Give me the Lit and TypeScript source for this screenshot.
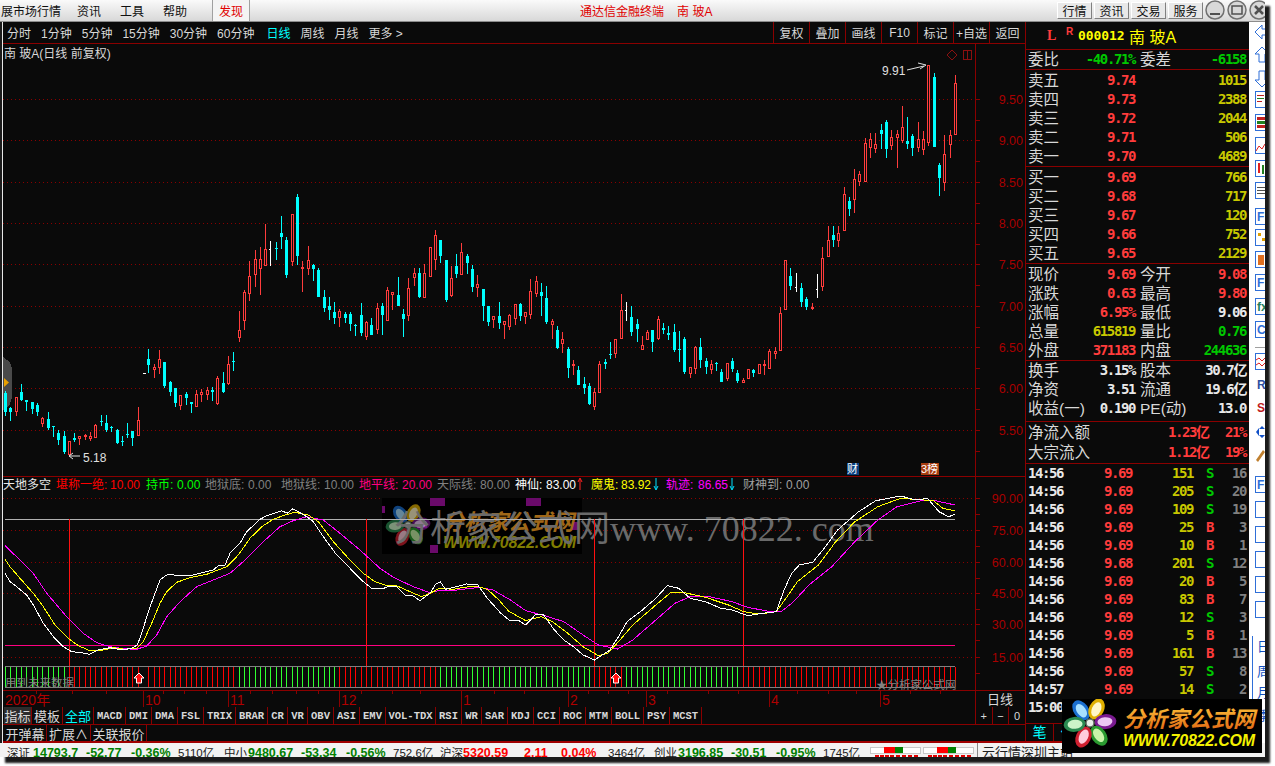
import { LitElement, html, svg, css } from 'lit';
import { customElement } from 'lit/decorators.js';

// candle traces read off the reference: u, bodyTop, bodyBottom, wickTop, wickBottom, kind
const TRACE_A = `16 638 695 632 708 c;31 683 695 680 722 c;49 652 697 652 708 r;64 636 660 612 663 c;79 660 665 660 692 c;97 666 686 666 702 c;112 675 695 670 708 c;127 715 731 712 741 r;145 717 744 697 750 c;160 738 741 738 771 c;175 759 780 751 795 c;193 768 816 753 822 c;208 784 826 784 830 r;223 774 780 760 786 c;238 769 776 769 795 r;256 766 771 762 780 r;271 768 776 756 782 r;286 736 773 733 773 r;304 722 725 705 738 c;319 729 750 705 756 c;334 741 744 738 756 c;352 750 789 747 792 c;367 783 786 768 798 c;382 762 765 729 774 c;397 753 774 753 798 c;415 720 767 681 768 r;445 537 555 507 579 c;463 561 571 552 594 r;478 537 564 510 582 r;493 546 618 546 623 c;511 606 636 603 648 c;526 624 669 624 681 c;541 645 677 645 690 r;559 642 654 636 675 c;574 666 671 666 699 c;589 642 680 630 680 r;604 636 645 627 666 r;622 630 645 621 660 r;637 630 635 621 664 c;652 594 672 588 675 r;670 609 636 576 639 c;685 552 612 528 615 r;700 543 546 516 573 c;718 450 473 393 486 r;733 336 423 330 450 r;748 288 342 243 363 r;766 237 285 210 321 r;781 237 267 201 345 r;796 207 258 132 258 r;811 207 208 183 258 w;829 203 206 186 240 c;844 159 171 108 207 c;859 180 285 171 294 c;877 102 246 102 258 r;892 51 228 42 255 c;907 261 266 243 336 r;925 240 267 198 285 r;940 255 267 252 303 c;955 270 351 264 351 c;973 351 384 330 396 c;988 378 390 351 420 c;1003 396 414 366 432 c;1018 393 414 387 441 r;1036 402 414 396 429 c;1051 402 432 396 453 c;1066 435 438 432 468 c;1084 405 459 369 468 c;1099 426 471 423 480 r;1114 435 465 414 465 c;1132 384 450 369 462 r;1147 378 405 369 465 c;1162 330 423 321 423 r;1177 336 345 336 390 r;1195 345 378 291 378 c`;
const TRACE_B = `10 372 387 357 441 c;25 294 378 264 393 r;43 249 264 234 288 r;58 249 321 234 324 c;73 249 324 222 324 r;91 171 261 171 261 r;106 135 210 120 240 r;121 150 198 150 219 c;139 210 330 210 336 c;154 264 318 228 321 r;169 228 252 192 264 c;184 186 255 159 255 r;202 198 219 192 252 c;217 237 291 225 306 c;232 282 294 255 321 r;250 297 348 297 393 c;265 348 396 348 408 c;280 378 390 378 414 r;298 378 399 336 417 c;313 393 405 393 447 r;328 375 411 372 420 r;346 342 387 342 405 r;361 342 378 339 393 c;376 366 381 366 402 r;391 303 375 267 387 r;409 273 312 258 321 r;424 306 318 279 378 c;439 324 396 288 402 c;457 393 405 387 447 r;472 420 474 408 477 c;487 447 462 426 489 r;505 477 534 471 564 c;520 522 527 510 555 r;535 540 585 528 585 c;553 582 594 561 612 c;568 588 642 579 645 c;583 606 651 594 660 r;598 522 608 513 608 r;616 516 522 507 537 c;631 492 495 456 507 c;646 447 492 447 504 r;664 360 447 312 447 r;679 360 361 336 393 w;694 381 426 348 438 c;712 402 417 387 456 c;727 465 480 438 480 r;742 426 450 420 450 r;757 420 456 420 486 c;775 387 447 378 450 r;790 414 420 399 432 c;805 429 435 408 450 c;823 426 480 402 486 c;838 477 480 423 516 c;853 447 546 441 552 c;871 531 552 531 564 r;886 471 537 468 552 r;901 471 510 444 534 c;919 513 531 504 552 c;934 522 540 510 552 r;949 519 522 516 543 c;964 546 576 537 576 c;982 519 567 519 573 r;997 513 537 504 546 c;1012 549 573 540 579 c;1030 570 579 564 579 r;1045 537 567 537 567 r;1060 540 549 537 561 c;1078 522 552 522 552 r;1093 522 528 510 555 r;1108 483 537 477 537 r;1126 483 492 471 507 r;1141 369 483 351 483 r;1156 210 360 210 360 r`;
const TRACE_C = `31 678 708 654 720 c;49 711 712 669 725 w;64 714 756 699 771 c;79 747 771 741 780 c;97 771 777 759 780 r;112 717 718 672 744 w;127 624 711 591 723 r;145 570 621 528 621 r;160 555 570 528 591 c;175 549 572 528 591 r;193 432 543 411 543 r;208 453 477 441 498 c;223 387 450 357 489 r;238 372 396 363 408 r;256 279 396 264 396 r;271 267 294 249 324 r;286 282 297 249 309 r;304 240 252 222 297 c;319 216 297 210 324 c;334 261 288 240 300 r;352 252 264 240 354 r;367 231 273 168 279 r;382 273 282 201 297 c;397 258 294 252 318 c;415 267 294 216 306 r;430 267 300 243 315 r;445 45 279 45 288 r;463 81 291 69 291 c;478 345 384 339 438 c;493 312 399 255 423 r;511 255 285 240 324 r;526 99 255 75 255 r`;

interface Candle { x: number; top: number; bottom: number; wickTop: number; wickBottom: number; kind: string; }

const readTrace = (trace: string, x0: number, y0: number): Candle[] =>
  trace.split(';').map((row) => {
    const p = row.split(' ');
    return {
      x: Math.floor(x0 + +p[0] / 3),
      top: Math.round(y0 + +p[1] / 3),
      bottom: Math.round(y0 + +p[2] / 3),
      wickTop: Math.round(y0 + +p[3] / 3),
      wickBottom: Math.round(y0 + +p[4] / 3),
      kind: p[5],
    };
  });

const CANDLES = [...readTrace(TRACE_A, 0, 180), ...readTrace(TRACE_B, 400, 190), ...readTrace(TRACE_C, 780, 50)];

// indicator lines, two crops each
const line = (a: number[], b: number[]) => {
  const pts: string[] = [];
  for (let i = 0; i < a.length; i += 2) pts.push(`${(a[i] / 3).toFixed(1)},${(470 + a[i + 1] / 3).toFixed(1)}`);
  for (let i = 0; i < b.length; i += 2) pts.push(`${(430 + b[i] / 2.613).toFixed(1)},${(470 + b[i + 1] / 3).toFixed(1)}`);
  return pts.join(' ');
};

const WHITE_LINE = line(
  [15,310,30,335,50,350,80,375,100,405,130,460,160,500,190,530,215,545,245,548,268,553,295,540,330,533,365,540,395,535,412,525,425,490,445,425,465,370,480,330,500,315,515,313,530,318,570,317,600,310,640,300,655,287,675,285,690,250,720,220,740,185,780,148,800,137,845,122,862,130,878,116,895,125,920,140,940,155,970,200,1010,255,1050,295,1090,335,1115,355,1145,357,1170,348,1190,350,1215,375,1240,378,1260,392,1290,370],
  [0,370,15,342,27,335,40,358,70,350,95,342,125,345,150,385,185,430,210,453,230,450,250,465,275,435,295,432,325,480,350,510,375,530,400,555,430,570,470,540,490,505,515,455,555,420,590,385,620,347,650,355,680,385,720,395,760,415,790,420,830,437,870,430,905,425,925,360,945,310,965,285,1000,277,1030,235,1065,180,1120,125,1165,92,1230,78,1270,90,1300,85,1330,125,1355,140,1372,133]
);
const YELLOW_LINE = line(
  [15,268,30,290,60,325,100,370,130,410,165,465,205,505,235,527,270,542,300,542,340,533,375,538,410,535,430,515,455,460,480,400,500,365,530,337,570,323,620,313,680,290,715,255,750,205,785,170,820,148,855,135,885,127,925,135,955,155,1000,215,1050,270,1090,310,1125,335,1160,347,1190,347,1230,365,1265,380,1290,370],
  [0,370,25,355,60,358,90,352,120,348,150,358,180,390,205,423,250,452,290,440,320,455,360,490,400,530,440,557,465,550,500,505,530,465,590,405,630,367,665,368,720,382,780,405,820,425,860,432,905,425,930,385,960,335,1015,285,1060,215,1110,155,1170,110,1230,85,1290,90,1315,92,1340,115,1372,123]
);
const MAGENTA_LINE = line(
  [15,227,60,270,100,310,140,370,200,440,250,490,290,518,330,530,370,536,410,538,440,528,470,495,500,440,540,395,590,350,640,330,690,310,735,270,790,215,840,170,880,152,920,140,970,150,1020,190,1080,240,1140,295,1180,322,1240,350,1290,368],
  [0,368,30,360,70,360,130,352,165,360,210,390,250,422,300,437,350,455,400,495,440,525,490,537,530,510,590,450,640,400,680,380,730,380,790,395,830,412,880,423,920,423,950,395,990,345,1050,290,1110,215,1170,150,1220,110,1280,93,1320,92,1372,105]
);

const MAIN_LEVELS: [number, string][] = [[99,'9.50'],[140,'9.00'],[182,'8.50'],[223,'8.00'],[264,'7.50'],[306,'7.00'],[347,'6.50'],[388,'6.00'],[430,'5.50']];
const SUB_LEVELS: [number, string][] = [[498,'90.00'],[530,'75.00'],[562,'60.00'],[593,'45.00'],[624,'30.00'],[657,'15.00']];
const BAR_RED: [number, number][] = [[69,234],[335,437],[592,622],[741,960]];
const MONTHS: [number, string][] = [[143,'10'],[228,'11'],[339,'12'],[461,'1'],[568,'2'],[646,'3'],[769,'4'],[880,'5']];
const MINOR_TICKS = [36,72,106,163,184,206,250,272,296,318,361,392,420,494,524,588,608,628,667,708,738,797,828,856,910,940];

const LEGEND: [number, string, string][] = [
  [3,'天地多空','#e8e8e8'],[56,'堪称一绝:','#ff0000'],[110,'10.00','#ff0000'],[146,'持币:','#00ff00'],[177,'0.00','#00ff00'],
  [205,'地狱底:','#808080'],[248,'0.00','#808080'],[281,'地狱线:','#808080'],[324,'10.00','#808080'],
  [359,'地平线:','#ff0080'],[402,'20.00','#ff0080'],[437,'天际线:','#808080'],[480,'80.00','#808080'],
  [515,'神仙:','#ffffff'],[546,'83.00','#ffffff'],[591,'魔鬼:','#ffff00'],[621,'83.92','#ffff00'],
  [666,'轨迹:','#ff00ff'],[698,'86.65','#ff00ff'],[743,'财神到:','#a0a0a0'],[786,'0.00','#a0a0a0'],
];

const PERIODS = ['分时','1分钟','5分钟','15分钟','30分钟','60分钟','日线','周线','月线','更多 >'];
const ACTIONS = ['复权','叠加','画线','F10','标记','+自选','返回'];
const TABS: [string, number][] = [['MACD',32],['DMI',26],['DMA',26],['FSL',26],['TRIX',32],['BRAR',32],['CR',20],['VR',20],['OBV',26],['ASI',26],['EMV',26],['VOL-TDX',50],['RSI',26],['WR',20],['SAR',26],['KDJ',26],['CCI',26],['ROC',26],['MTM',26],['BOLL',32],['PSY',26],['MCST',32]];

const ASKS = [['卖五','9.74','1015'],['卖四','9.73','2388'],['卖三','9.72','2044'],['卖二','9.71','506'],['卖一','9.70','4689']];
const BIDS = [['买一','9.69','766'],['买二','9.68','717'],['买三','9.67','120'],['买四','9.66','752'],['买五','9.65','2129']];
const STATS: string[][] = [
  ['现价','9.69','up','今开','9.08','up'],['涨跌','0.63','up','最高','9.80','up'],['涨幅','6.95%','up','最低','9.06','wh'],
  ['总量','615819','yl','量比','0.76','gn'],['外盘','371183','up','内盘','244636','gn'],
];
const FINANCE: string[][] = [['换手','3.15%','股本','30.7亿'],['净资','3.51','流通','19.6亿'],['收益(一)','0.190','PE(动)','13.0']];
const TRADES: [string, string, string, string, string][] = [
  ['14:56','9.69','151','S','16'],['14:56','9.69','205','S','20'],['14:56','9.69','109','S','19'],['14:56','9.69','25','B','3'],
  ['14:56','9.69','10','B','1'],['14:56','9.68','201','S','12'],['14:56','9.69','20','B','5'],['14:56','9.69','83','B','7'],
  ['14:56','9.69','12','S','3'],['14:56','9.69','5','B','1'],['14:56','9.69','161','B','13'],['14:56','9.69','57','S','8'],
  ['14:57','9.69','14','S','2'],['15:00','','','',''],
];
const STATUS: [string, number, string][] = [
  ['深证',26,'tx'],['14793.7',53,'dn'],['-52.77',45,'dn'],['-0.36%',47,'dn'],['5110亿',46,'tx'],
  ['中小',24,'tx'],['9480.67',53,'dn'],['-53.34',45,'dn'],['-0.56%',47,'dn'],['752.6亿',47,'tx'],
  ['沪深',23,'tx'],['5320.59',61,'rs'],['2.11',37,'rs'],['0.04%',47,'rs'],['3464亿',46,'tx'],
  ['创业',24,'tx'],['3196.85',53,'dn'],['-30.51',45,'dn'],['-0.95%',47,'dn'],['1745亿',47,'tx'],
];

const flower = (cx: number, cy: number, k: number) => {
  const petals: [number, string, string][] = [
    [-125,'#1a6fd0','#a8e0ff'],[-65,'#e0b000','#fff6c8'],[-5,'#7a1a90','#ecc8f4'],
    [55,'#2a9a30','#c8f4a8'],[115,'#d02030','#ffccdc'],[175,'#2a8a50','#ccf4c8'],
  ];
  return svg`<g transform="translate(${cx} ${cy}) scale(${k})">
    ${petals.map(([a, outer, inner]) => svg`<g transform="rotate(${a})">
      <ellipse cx="15.5" rx="11" ry="7.5" fill=${outer}></ellipse>
      <ellipse cx="15" rx="7.5" ry="4.5" fill=${inner}></ellipse>
    </g>`)}
    <circle r="4" fill="#e8f0e8" stroke="#607060" stroke-width="1.5"></circle>
  </g>`;
};

@customElement('app-root')
export class AppRoot extends LitElement {
  static styles = css`
    :host {
      display: block;
      position: relative;
      width: 1275px;
      height: 766px;
      overflow: hidden;
      background: #fff;
      font-family: 'Liberation Sans', 'Noto Sans CJK SC', sans-serif;
      font-size: 12px;
      --rule: #8a0000;
      --bg: #0a0a0a;
    }
    .window {
      width: 1265px;
      height: 757px;
      display: flex;
      flex-direction: column;
      background: #f0f0f0;
      box-shadow: 5px 6px 2px #1a1a1a;
    }
    .menubar {
      height: 22px;
      flex: none;
      box-sizing: border-box;
      display: flex;
      align-items: center;
      overflow: hidden;
      color: #101010;
      background: linear-gradient(#fafafa, #d8d8d8);
      border-bottom: 1px solid #8c8c8c;
      padding-left: 1px;
    }
    .menubar .item { margin-right: 19px; }
    .menubar .item:first-child { margin-right: 16px; }
    .menubar .find {
      width: 38px;
      height: 21px;
      margin-left: 6px;
      box-sizing: border-box;
      display: flex;
      align-items: center;
      justify-content: center;
      color: #e00000;
      background: #f4f4f4;
      border-left: 1px solid #a0a0a0;
      border-right: 1px solid #a0a0a0;
    }
    .menubar .title { margin-left: 330px; color: #e00000; display: flex; gap: 13px; }
    .menubar .right { margin-left: auto; display: flex; align-items: center; }
    .menubar .btn {
      width: 35px;
      height: 17px;
      margin-right: 2px;
      box-sizing: border-box;
      display: flex;
      align-items: center;
      justify-content: center;
      background: #e8e8e8;
      border: 1px solid #fff;
      border-right-color: #808080;
      border-bottom-color: #808080;
    }
    .menubar svg { display: block; }
    .body { flex: 1; min-height: 0; display: flex; }
    .edge {
      width: 3px;
      flex: none;
      box-sizing: border-box;
      background: #1c1c1c;
      border-right: 1px solid #e8e8e8;
    }
    .charts { width: 1022px; flex: none; display: flex; flex-direction: column; background: var(--bg); color: #d8d8d8; }
    .periods {
      height: 22px;
      flex: none;
      box-sizing: border-box;
      display: flex;
      align-items: stretch;
      border-bottom: 1px solid var(--rule);
      padding-left: 4px;
    }
    .periods .left { display: flex; align-items: center; gap: 10px; flex: 1; }
    .periods .on { color: #00ffff; margin-left: 2px; }
    .periods .act {
      width: 36px;
      display: flex;
      align-items: center;
      justify-content: center;
      box-sizing: border-box;
      border-left: 1px solid var(--rule);
    }
    .plot { display: block; width: 1022px; height: 663px; flex: none; }
    .plot text { font-family: 'Liberation Sans', 'Noto Sans CJK SC', sans-serif; font-size: 12px; fill: #d8d8d8; }
    .plot .axis { fill: #a80000; text-anchor: end; font-size: 12.5px; }
    .plot .date { fill: #b00000; font-size: 14px; }
    .plot .note { font-size: 11.5px; fill: #808080; }
    .plot .mark { font-size: 11px; fill: #fff; }
    .plot .wm { font-size: 36px; fill: #6a6a6a; font-family: 'Liberation Serif', 'Noto Sans CJK SC', serif; }
    .plot .wm1 { font-size: 22px; font-weight: 700; font-style: italic; fill: #a06818; }
    .plot .wm2 { font-size: 16px; font-weight: 700; font-style: italic; fill: #807c00; }
    .tabs {
      height: 18px;
      flex: none;
      box-sizing: border-box;
      display: flex;
      padding-left: 1px;
      border-bottom: 1px solid var(--rule);
    }
    .tabs .cell {
      flex: none;
      box-sizing: border-box;
      display: flex;
      align-items: center;
      justify-content: center;
      border-right: 1px solid var(--rule);
      white-space: nowrap;
    }
    .tabs .cjk { width: 31px; font-size: 13px; }
    .tabs .grey { width: 28px; background: #2c2c2c; }
    .tabs .sel { color: #00ffff; }
    .tabs .code { font-family: 'Liberation Mono', monospace; font-size: 10.5px; font-weight: 700; }
    .tabs .zoomers { margin-left: auto; display: flex; width: 50px; border-left: 1px solid var(--rule); box-sizing: border-box; }
    .tabs .zoomers .cell { flex: 1; font-size: 11px; }
    .tabs .zoomers .cell:last-child { border: 0; }
    .tabs .w43 { width: 43px; }
    .tabs .w44 { width: 44px; }
    .tabs .w56 { width: 56px; }
    .tabs.second { border-bottom: 2px solid #a00000; }
    .panel {
      width: 224px;
      flex: none;
      box-sizing: border-box;
      display: flex;
      flex-direction: column;
      background: var(--bg);
      border-left: 1px solid var(--rule);
      border-bottom: 2px solid #a00000;
      color: #d8d8d8;
      font-size: 15.5px;
    }
    .head {
      height: 28px;
      flex: none;
      box-sizing: border-box;
      display: flex;
      align-items: center;
      padding-left: 21px;
      color: #ffff00;
      border-bottom: 1px solid var(--rule);
    }
    .head .l { color: #ff3c3c; font: 700 14px 'Liberation Serif', serif; width: 19px; }
    .head .r { color: #ff3c3c; font: 700 10px 'Liberation Sans', sans-serif; width: 12px; margin-top: -8px; }
    .head .code { font: 700 13px 'DejaVu Sans Mono', monospace; width: 51px; letter-spacing: -.1px; }
    .head .name { font-size: 16px; }
    .sec { flex: none; padding: 0 3px 0 2px; border-bottom: 1px solid var(--rule); }
    .sec.one { height: 19px; }
    .sec.five { height: 95px; padding-top: 1px; }
    .sec.three { height: 60px; }
    .sec.two { height: 41px; }
    .row {
      height: 19px;
      display: grid;
      grid-template-columns: 40px 67px 45px 1fr;
      align-items: center;
      white-space: nowrap;
      line-height: 19px;
    }
    .row > :nth-child(2), .row > :nth-child(4) { text-align: right; }
    .row > :nth-child(3) { padding-left: 5px; }
    .num {
      font-family: 'DejaVu Sans Mono', 'Noto Sans CJK SC', monospace;
      font-weight: 700;
      font-size: 14px;
      letter-spacing: -1.4px;
    }
    .up { color: #ff3c3c; }
    .gn { color: #00c800; }
    .yl { color: #c8c800; }
    .wh { color: #e8e8e8; }
    .gy { color: #808080; }
    .row.flows { height: 20px; grid-template-columns: 140px 44px 1fr; }
    .row.flows > :nth-child(2) { text-align: left; padding: 0; }
    .row.flows > :nth-child(3) { text-align: right; padding: 0; }
    .trades { flex: 1; min-height: 0; padding: 0 3px 0 2px; overflow: hidden; border-bottom: 1px solid var(--rule); }
    .trade {
      height: 18px;
      display: grid;
      grid-template-columns: 40px 64px 61px 34px 1fr;
      align-items: center;
      text-align: right;
    }
    .trade > :first-child { text-align: left; }
    .trade > :nth-child(4) { text-align: left; padding-left: 13px; }
    .modes { height: 17px; flex: none; display: flex; color: #00ffff; font-size: 14px; }
    .modes span { width: 27px; text-align: center; line-height: 17px; border-right: 1px solid var(--rule); }
    .tools { width: 16px; flex: none; background: #fff; }
    .tools svg { display: block; }
    .tools text { font-family: 'Liberation Sans', 'Noto Sans CJK SC', sans-serif; }
    .status {
      height: 14px;
      flex: none;
      display: flex;
      overflow: hidden;
      padding-left: 7px;
      color: #202020;
      background: #f2f2f2;
      white-space: nowrap;
      line-height: 20px;
      font-size: 12.5px;
    }
    .status .tx { font-size: 11.5px; }
    .status .dn { color: #008000; font-weight: 700; }
    .status .rs { color: #ff0000; font-weight: 700; }
    .status .minis { display: block; flex: none; }
    .status .cloud { margin-left: 3px; border-left: 1px solid #888; padding-left: 4px; font-size: 13px; }
    .logo { position: absolute; left: 1062px; top: 699px; width: 200px; height: 54px; display: block; background: #000; }
    .logo .t1 { font: italic 700 22px 'Noto Sans CJK SC', sans-serif; fill: url(#logoGrad); }
    .logo .t2 { font: italic 700 16px 'Liberation Sans', sans-serif; fill: #f4f000; }
  `;

  private candle(c: Candle) {
    const x = c.x;
    if (c.kind === 'w') {
      return svg`<rect x=${x} y=${c.wickTop} width="1" height=${c.wickBottom - c.wickTop} fill="#fff"></rect>
        <rect x=${x - 1} y=${c.top} width="1" height="1" fill="#fff"></rect>`;
    }
    const col = c.kind === 'c' ? '#00ffff' : '#ff3c3c';
    const wick = svg`<rect x=${x} y=${c.wickTop} width="1" height=${Math.max(0, c.top - c.wickTop)} fill=${col}></rect>
      <rect x=${x} y=${c.bottom} width="1" height=${Math.max(0, c.wickBottom - c.bottom)} fill=${col}></rect>`;
    const h = Math.max(1, c.bottom - c.top);
    return c.kind === 'c'
      ? svg`${wick}<rect x=${x - 1} y=${c.top} width="3" height=${h} fill=${col}></rect>`
      : svg`${wick}<rect x=${x - 0.5} y=${c.top + 0.5} width="2" height=${Math.max(1, h - 1)} fill="none" stroke=${col}></rect>`;
  }

  private volumeStrip() {
    return CANDLES.map((c) => {
      const red = BAR_RED.some(([a, b]) => c.x >= a && c.x <= b);
      return svg`<rect x=${c.x} y="667" width="1" height="20" fill=${red ? '#ff0000' : '#30ff30'}></rect>`;
    });
  }

  private upArrow(x: number) {
    return svg`<path d="M${x} 673 L${x + 5} 678 H${x + 2.5} V683 H${x - 2.5} V678 H${x - 5} Z" fill="#ff1010" stroke="#fff"></path>`;
  }

  // everything between y=44 and y=707, drawn in page coordinates
  private plot() {
    return html`<svg class="plot" viewBox="3 44 1022 663" shape-rendering="crispEdges">
      ${[...MAIN_LEVELS, ...SUB_LEVELS].map(([y]) => svg`<line x1="3" x2="975" y1=${y + 0.5} y2=${y + 0.5} stroke="#8a0000" stroke-dasharray="1 3"></line>`)}
      <g shape-rendering="auto">
        <text x="4" y="58">南 玻A(日线 前复权)</text>
        ${MAIN_LEVELS.map(([y, t]) => svg`<text class="axis" x="1023" y=${y + 5}>${t}</text>`)}
        ${SUB_LEVELS.map(([y, t]) => svg`<text class="axis" x="1023" y=${y + 5}>${t}</text>`)}
      </g>
      ${MAIN_LEVELS.flatMap(([y]) => [y, y + 21]).map((y) => svg`<line x1="975" x2="980" y1=${y + 0.5} y2=${y + 0.5} stroke="#8a0000"></line>`)}
      ${SUB_LEVELS.flatMap(([y]) => [y, y + 16]).map((y) => svg`<line x1="975" x2="980" y1=${y + 0.5} y2=${y + 0.5} stroke="#8a0000"></line>`)}
      <line x1="975.5" x2="975.5" y1="44" y2="707" stroke="#8a0000"></line>
      <line x1="3" x2="1025" y1="476.5" y2="476.5" stroke="#8a0000"></line>
      <line x1="3" x2="1025" y1="690.5" y2="690.5" stroke="#8a0000"></line>

      <path d="M952 50 L957 55 L952 60 L947 55 Z" fill="none" stroke="#8a1010"></path>
      <rect x="963.5" y="50.5" width="8" height="9" fill="none" stroke="#8a1010"></rect>
      <line x1="967.5" x2="967.5" y1="50" y2="60" stroke="#8a1010"></line>

      <path d="M3 357 L10 362 L12 368 V398 L9 406 L3 410 Z" fill="#4a4a4a"></path>
      ${CANDLES.map((c) => this.candle(c))}
      <path d="M4 378 L9 382.5 L4 387 Z" fill="#e8a000" shape-rendering="auto"></path>
      <rect x="143" y="373" width="3" height="1" fill="#fff"></rect>

      <g shape-rendering="auto" stroke="#e0e0e0" fill="none">
        <path d="M907 70 L924 66 M918 63 L926 65 L920 69"></path>
        <path d="M80 456 H70 M73 453 L69 456 L73 459"></path>
      </g>
      <g shape-rendering="auto">
        <text x="882" y="75" style="fill:#e0e0e0">9.91</text>
        <text x="83" y="462" style="fill:#e0e0e0">5.18</text>
      </g>
      <rect x="847" y="463" width="12" height="12" fill="#0a3f80"></rect>
      <rect x="921" y="463" width="18" height="12" fill="#a83c10"></rect>
      <g shape-rendering="auto">
        <text class="mark" x="847" y="473">财</text>
        <text class="mark" x="921" y="473">3榜</text>
        ${LEGEND.map(([x, t, c]) => svg`<text x=${x} y="489" style="fill:${c}">${t}</text>`)}
        <path d="M580 490 V479 M578 482 L580 478 L582 482" stroke="#ff2020" fill="none"></path>
        <path d="M656 478 V489 M654 486 L656 490 L658 486" stroke="#00e0ff" fill="none"></path>
        <path d="M732 478 V489 M730 486 L732 490 L734 486" stroke="#00e0ff" fill="none"></path>
      </g>

      <rect x="382" y="498" width="200" height="56" fill="#000"></rect>
      ${[[430,498,15,8],[526,498,15,8],[572,522,7,8],[430,545,8,8],[382,506,3,7],[417,525,10,3]].map(([x, y, w, h]) => svg`<rect x=${x} y=${y} width=${w} height=${h} fill="#6a0a6a"></rect>`)}
      <g shape-rendering="auto">
        <g opacity="0.6">${flower(408, 525, 0.85)}</g>
        <text class="wm1" x="442" y="530">分析家公式网</text>
        <text class="wm2" x="443" y="548" textLength="133">WWW.70822.COM</text>
        <text class="wm" x="394" y="541">分析家公式网www. 70822. com</text>
      </g>

      <line x1="5" x2="955" y1="519.5" y2="519.5" stroke="#b0b0b0"></line>
      <line x1="5" x2="955" y1="645.5" y2="645.5" stroke="#ff0080"></line>
      ${[69, 366, 594, 743].map((x) => svg`<line x1=${x + 0.5} x2=${x + 0.5} y1="519" y2="666" stroke="#ff1010"></line>`)}
      <polyline points=${MAGENTA_LINE} fill="none" stroke="#ff00ff"></polyline>
      <polyline points=${YELLOW_LINE} fill="none" stroke="#ffff00"></polyline>
      <polyline points=${WHITE_LINE} fill="none" stroke="#ffffff"></polyline>

      ${this.volumeStrip()}
      <rect x="5" y="666" width="950" height="1" fill="#808080"></rect>
      <rect x="5" y="687" width="950" height="1" fill="#808080"></rect>
      <g shape-rendering="auto">
        ${this.upArrow(139)}${this.upArrow(616)}
        <text class="note" x="5" y="687">用到未来数据</text>
        <text class="note" x="876" y="689">★分析家公式网</text>
      </g>

      ${MONTHS.map(([x]) => svg`<line x1=${x + 0.5} x2=${x + 0.5} y1="691" y2="707" stroke="#8a0000"></line>`)}
      ${MINOR_TICKS.map((x) => svg`<line x1=${x + 0.5} x2=${x + 0.5} y1="691" y2="694" stroke="#8a0000"></line>`)}
      <g shape-rendering="auto">
        <text class="date" x="5" y="705">2020年</text>
        ${MONTHS.map(([x, t]) => svg`<text class="date" x=${x + 2} y="705">${t}</text>`)}
        <text x="987" y="704" style="font-size:13px">日线</text>
      </g>
    </svg>`;
  }

  private side() {
    return html`<div class="panel">
      <div class="head">
        <span class="l">L</span><span class="r">R</span><span class="code">000012</span><span class="name">南 玻A</span>
      </div>
      <div class="sec one">
        <div class="row"><span>委比</span><span class="num gn">-40.71%</span><span>委差</span><span class="num gn">-6158</span></div>
      </div>
      <div class="sec five">
        ${ASKS.map(([l, p, v]) => html`<div class="row"><span>${l}</span><span class="num up">${p}</span><span></span><span class="num yl">${v}</span></div>`)}
      </div>
      <div class="sec five">
        ${BIDS.map(([l, p, v]) => html`<div class="row"><span>${l}</span><span class="num up">${p}</span><span></span><span class="num yl">${v}</span></div>`)}
      </div>
      <div class="sec five">
        ${STATS.map(([a, b, bc, c, d, dc]) => html`<div class="row"><span>${a}</span><span class="num ${bc}">${b}</span><span>${c}</span><span class="num ${dc}">${d}</span></div>`)}
      </div>
      <div class="sec three">
        ${FINANCE.map(([a, b, c, d]) => html`<div class="row"><span>${a}</span><span class="num wh">${b}</span><span>${c}</span><span class="num wh">${d}</span></div>`)}
      </div>
      <div class="sec two">
        <div class="row flows"><span>净流入额</span><span class="num up">1.23亿</span><span class="num up">21%</span></div>
        <div class="row flows"><span>大宗流入</span><span class="num up">1.12亿</span><span class="num up">19%</span></div>
      </div>
      <div class="trades">
        ${TRADES.map(([t, p, v, s, n]) => html`<div class="trade num">
          <span class="wh">${t}</span><span class="up">${p}</span><span class="yl">${v}</span>
          <span class=${s === 'S' ? 'gn' : 'up'}>${s}</span><span class="gy">${n}</span>
        </div>`)}
      </div>
      <div class="modes"><span>笔</span><span>价</span></div>
    </div>`;
  }

  private tools() {
    const B = '#2f6fd8';
    const frame = (y: number, inner: unknown = '') => svg`<rect x="6.5" y=${y - 8.5} width="14" height="16" fill="#fff" stroke=${B}></rect>${inner}`;
    const label = (y: number, t: string, c = B) => svg`<text x="8" y=${y + 4} font-size="12" font-weight="700" fill=${c}>${t}</text>`;
    return svg`<svg width="16" height="719" viewBox="0 22 16 719" shape-rendering="crispEdges">
      <g shape-rendering="auto" fill="#fff" stroke=${B}>
        <path d="M6 32 L13 25 V29 H20 V35 H13 V39 Z"></path>
        <path d="M13 47 L20 54 H16 V62 H10 V54 H6 Z"></path>
        <path d="M13 87 L20 80 H16 V71 H10 V80 H6 Z"></path>
      </g>
      ${frame(100, svg`<rect x="8" y="95" width="7" height="1" fill="#c02020"></rect><rect x="8" y="98" width="7" height="1" fill="#208020"></rect><rect x="8" y="101" width="5" height="1" fill="#c02020"></rect>`)}
      ${frame(123, svg`<rect x="8" y="117" width="8" height="3" fill="#c02020"></rect><rect x="8" y="121" width="8" height="3" fill="#208020"></rect><rect x="8" y="125" width="8" height="3" fill="#c02020"></rect>`)}
      ${frame(146, svg`<path d="M7 151 L10 146 L13 149 L16 144" stroke="#e02020" fill="none" shape-rendering="auto"></path>`)}
      ${frame(169, svg`<rect x="9" y="163" width="2" height="10" fill="#e02020"></rect><rect x="13" y="165" width="2" height="9" fill="#208020"></rect>`)}
      ${frame(191, svg`<rect x="8" y="187" width="8" height="1" fill="#505050"></rect><rect x="8" y="190" width="8" height="1" fill="#505050"></rect><rect x="8" y="193" width="8" height="1" fill="#505050"></rect>`)}
      ${frame(217)}
      ${frame(238, svg`<rect x="9" y="233" width="3" height="3" fill="#e0a000"></rect><rect x="13" y="238" width="3" height="3" fill="#e0a000"></rect>`)}
      ${frame(260, svg`<rect x="9" y="255" width="6" height="10" fill="#e07020"></rect>`)}
      ${frame(283)}
      ${frame(307)}
      ${frame(330)}
      <rect x="6" y="347" width="10" height="1" fill="#a0a0a0"></rect>
      ${frame(362, svg`<path d="M7 360 L10 358 L13 361 L16 358 M7 365 L10 363 L13 366 L16 363" stroke="#e02020" fill="none" shape-rendering="auto"></path>`)}
      ${frame(485)}
      ${[510, 535, 560, 585, 610].map((y) => frame(y))}
      <rect x="3" y="636" width="1" height="98" fill=${B}></rect>
      <g shape-rendering="auto">
        ${label(217, 'F')}${label(283, 'F')}${label(307, 'fx', '#208060')}${label(330, 'C')}
        ${label(385, 'R', '#3050a0')}${label(408, 'S', '#c02020')}${label(485, 'F')}
        <path d="M7 432 L10 428 L10 436 Z M13 426 L16 429 L10 429 Z M13 438 L16 435 L10 435 Z" fill="#1050c8"></path>
        <path d="M7 460 L14 450 L16 452 L9 462 Z" fill="#c08030"></path>
        <text x="8" y="651" font-size="13" fill="#1050c0">日</text>
        <text x="8" y="676" font-size="13" fill="#1050c0">周</text>
        <text x="8" y="697" font-size="13" fill="#1050c0">月</text>
        <text x="8" y="720" font-size="13" fill="#1050c0">季</text>
      </g>
    </svg>`;
  }

  private miniBars(x: number) {
    return svg`<g transform="translate(${x} 0)">
      <rect x="0.5" y="4.5" width="50" height="6" fill="#fff" stroke="#c8c8c8"></rect>
      <rect x="14" y="4" width="11" height="6" fill="#ff0000"></rect>
      <rect x="25" y="4" width="8" height="6" fill="#008000"></rect>
      ${[5, 10, 15, 20, 26, 32, 38, 44].map((d) => svg`<rect x=${d} y="12" width="4" height="3" fill="#e00000"></rect>`)}
    </g>`;
  }

  render() {
    return html`
      <div class="window">
        <div class="menubar">
          <span class="item">展市场行情</span><span class="item">资讯</span><span class="item">工具</span><span class="item">帮助</span>
          <span class="find">发现</span>
          <span class="title"><span>通达信金融终端</span><span>南 玻A</span></span>
          <span class="right">
            <span class="btn">行情</span><span class="btn">资讯</span><span class="btn">交易</span><span class="btn">服务</span>
            <svg width="60" height="21" viewBox="0 0 60 21">
              <g fill="#d8d8d8" stroke="#707070" stroke-width="1.5">
                <circle cx="10" cy="10" r="9"></circle><circle cx="32" cy="10" r="9"></circle><circle cx="54" cy="10" r="9"></circle>
              </g>
              <path d="M5 14 H15" stroke="#505050" stroke-width="2"></path>
              <rect x="27" y="6" width="10" height="8" fill="none" stroke="#505050" stroke-width="1.5"></rect>
              <path d="M50 6 L58 14 M58 6 L50 14" stroke="#505050" stroke-width="2.5"></path>
            </svg>
          </span>
        </div>
        <div class="body">
          <div class="edge"></div>
          <div class="charts">
            <div class="periods">
              <div class="left">${PERIODS.map((p) => html`<span class=${p === '日线' ? 'on' : ''}>${p}</span>`)}</div>
              ${ACTIONS.map((a) => html`<span class="act">${a}</span>`)}
            </div>
            ${this.plot()}
            <div class="tabs">
              <span class="cell cjk grey">指标</span><span class="cell cjk">模板</span><span class="cell cjk sel">全部</span>
              ${TABS.map(([t, w]) => html`<span class="cell code" style="width:${w}px">${t}</span>`)}
              <span class="zoomers"><span class="cell">+</span><span class="cell">−</span><span class="cell">0</span></span>
            </div>
            <div class="tabs second">
              <span class="cell cjk w43">开弹幕</span><span class="cell cjk w44">扩展∧</span><span class="cell cjk w56">关联报价</span>
            </div>
          </div>
          ${this.side()}
          <div class="tools">${this.tools()}</div>
        </div>
        <div class="status">
          ${STATUS.map(([t, w, c]) => html`<span class=${c} style="width:${w}px">${t}</span>`)}
          <svg class="minis" width="104" height="15">${this.miniBars(0)}${this.miniBars(53)}</svg>
          <span class="cloud">云行情深圳主站</span>
        </div>
      </div>
      <svg class="logo" viewBox="0 0 200 54">
        <defs>
          <linearGradient id="logoGrad" x1="0" y1="0" x2="0" y2="1">
            <stop offset="0" stop-color="#ffd040"></stop>
            <stop offset="1" stop-color="#e06010"></stop>
          </linearGradient>
        </defs>
        ${flower(28, 24, 1)}
        <text class="t1" x="61" y="28">分析家公式网</text>
        <text class="t2" x="61" y="47" textLength="132">WWW.70822.COM</text>
      </svg>
    `;
  }
}
